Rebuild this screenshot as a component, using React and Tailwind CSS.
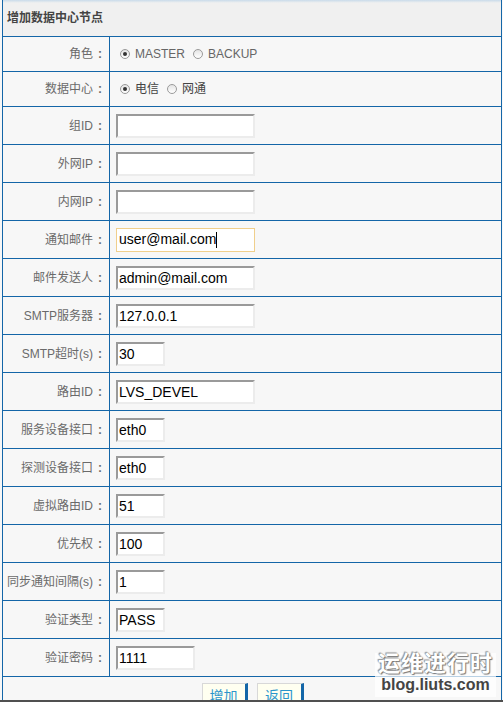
const rows = [
  { label: '组ID', value: '', w: 'w-[139px]' },
  { label: '外网IP', value: '', w: 'w-[139px]' },
  { label: '内网IP', value: '', w: 'w-[139px]' },
  { label: '通知邮件', value: 'user@mail.com', w: 'w-[139px]', focus: true },
  { label: '邮件发送人', value: 'admin@mail.com', w: 'w-[139px]' },
  { label: 'SMTP服务器', value: '127.0.0.1', w: 'w-[139px]' },
  { label: 'SMTP超时(s)', value: '30', w: 'w-[49px]' },
  { label: '路由ID', value: 'LVS_DEVEL', w: 'w-[139px]' },
  { label: '服务设备接口', value: 'eth0', w: 'w-[49px]' },
  { label: '探测设备接口', value: 'eth0', w: 'w-[49px]' },
  { label: '虚拟路由ID', value: '51', w: 'w-[49px]' },
  { label: '优先权', value: '100', w: 'w-[49px]' },
  { label: '同步通知间隔(s)', value: '1', w: 'w-[49px]' },
  { label: '验证类型', value: 'PASS', w: 'w-[49px]' },
  { label: '验证密码', value: '1111', w: 'w-[79px]' },
]

function Radio({ checked, label }) {
  return (
    <label className="flex items-center gap-[5px] mr-[8px]">
      <span className="w-[10px] h-[10px] rounded-full border border-[#9a9a9a] bg-gradient-to-b from-[#e4e4e4] to-white flex items-center justify-center">
        {checked && <span className="w-[4px] h-[4px] rounded-full bg-[#333]" />}
      </span>
      <span>{label}</span>
    </label>
  )
}

function Field({ row }) {
  if (row.focus) {
    return (
      <div className={`${row.w} h-[24px] border border-[#f0cf8c] bg-white px-[2px] flex items-center text-[14px] text-black`}>
        {row.value}
        <span className="w-px h-[16px] bg-black" />
      </div>
    )
  }
  return (
    <input
      type="text"
      readOnly
      value={row.value}
      className={`${row.w} h-[24px] border-2 border-t-[#9a9a9a] border-l-[#9a9a9a] border-b-[#ececec] border-r-[#ececec] bg-white px-[1px] text-[14px] text-black outline-none`}
    />
  )
}

function Row({ label, h, children }) {
  return (
    <div className={`grid grid-cols-[107px_1fr] border-b border-[#1466a8] ${h}`}>
      <div className="border-r border-[#1466a8] flex items-center justify-end pr-[7px] text-[12px] text-[#6a6a6a] whitespace-nowrap">
        {label}
        <span className="ml-[5px] font-bold">:</span>
      </div>
      <div className="flex items-center pl-[6px]">{children}</div>
    </div>
  )
}

export default function App() {
  return (
    <div
      className="w-[503px] h-[702px] bg-[#f7f7f7] flex flex-col relative"
      style={{ fontFamily: '"Liberation Sans", "Noto Sans CJK SC", sans-serif' }}
    >
      <div className="h-[700px] overflow-hidden pl-[2px]">
        <div className="w-[500px] border-x border-[#1466a8]">
          <div className="h-[37px] border-b border-[#1466a8] bg-gradient-to-b from-[#c9dbea] via-[#f0f0f0] via-[8%] to-[#f0f0f0] flex items-center pl-[4px] text-[12px] font-bold text-[#444]">
            增加数据中心节点
          </div>
          <Row label="角色" h="h-[35px]">
            <div className="flex items-center text-[12px] text-[#666] pl-[4px]">
              <Radio checked label="MASTER" />
              <Radio label="BACKUP" />
            </div>
          </Row>
          <Row label="数据中心" h="h-[35px]">
            <div className="flex items-center text-[12px] text-[#444] pl-[4px]">
              <Radio checked label="电信" />
              <Radio label="网通" />
            </div>
          </Row>
          {rows.map((r) => (
            <Row key={r.label} label={r.label} h="h-[38px]">
              <Field row={r} />
            </Row>
          ))}
          <div className="flex justify-center gap-[9px] pt-[6px] pl-[1px]">
            <button className="w-[46px] h-[24px] bg-[#fffff0] border border-[#d8d8d8] border-r-[3px] border-r-[#1466a8] text-[14px] leading-none pt-[2px] text-[#2a95cc]">
              增加
            </button>
            <button className="w-[47px] h-[24px] bg-[#fffff0] border border-[#d8d8d8] border-r-[3px] border-r-[#1466a8] text-[14px] leading-none pt-[2px] text-[#2a95cc]">
              返回
            </button>
          </div>
        </div>
      </div>
      <div className="h-[2px] bg-[#505050]" />

      <div className="absolute left-[375px] top-[653px] w-[121px] h-[44px] bg-white/70 flex flex-col items-center leading-none">
        <span
          className="text-[22px] font-bold text-white tracking-[1px]"
          style={{ textShadow: '0 0 1px #777, 1px 1px 1px #777, -1px -1px 1px #999' }}
        >
          运维进行时
        </span>
        <span className="text-[16px] font-bold text-[#444] mt-[2px]">blog.liuts.com</span>
      </div>
    </div>
  )
}
